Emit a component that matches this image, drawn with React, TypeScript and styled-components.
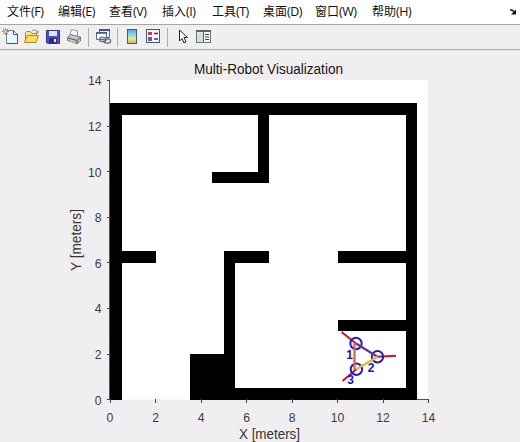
import React from 'react';
import styled, { createGlobalStyle } from 'styled-components';

const GlobalStyle = createGlobalStyle`
  * { box-sizing: border-box; }
  body { margin: 0; background: #f0eef0; overflow: hidden; }
`;

const Window = styled.div`
  width: 520px;
  height: 442px;
  display: flex;
  flex-direction: column;
  background: #f0eef0;
  overflow: hidden;
`;

const MenuBar = styled.nav`
  height: 24px;
  flex: none;
  display: flex;
  align-items: center;
  padding: 0 3px 0 7px;
  background: #fff;
`;

const MenuItem = styled.span<{ $width: number }>`
  width: ${p => p.$width}px;
  flex: none;
  font: 12px/24px 'Open Sans', 'Noto Sans CJK SC', sans-serif;
  color: #111;
  white-space: nowrap;
`;

const Shortcut = styled.span`
  font-size: 12.5px;
  letter-spacing: -0.5px;
`;

const DockButton = styled.span`
  margin-left: auto;
  display: flex;
`;

const ToolBar = styled.div`
  height: 26px;
  flex: none;
  display: flex;
  align-items: center;
  padding-left: 2px;
  background: #f0eff0;
  border-top: 1px solid #a6a6a6;
  border-bottom: 1px solid #b2b0b6;
`;

const Tool = styled.span<{ $gap?: number }>`
  display: flex;
  margin: -2px 0 0 ${p => p.$gap ?? 0}px;
`;

const Separator = styled.span<{ $gap: number }>`
  width: 1px;
  height: 19px;
  margin-left: ${p => p.$gap}px;
  background: #b0b0b0;
`;

const Figure = styled.main`
  flex: 1;
  min-height: 0;
  display: flex;
  border-top: 1px solid #e2e1e4;
`;

const Icon = ({ children }: { children: React.ReactNode }) => (
  <svg width="17" height="17" viewBox="0 0 17 17">{children}</svg>
);

const NewIcon = () => (
  <Icon>
    <path d="M4.5 2.5h7l4 4v9h-11z" fill="#eef5ff" stroke="#6b87a8" />
    <path d="M11.5 2.5v4h4M15.5 6v9.5H5" fill="none" stroke="#345a85" />
    <path d="M3.5 0v7M0 3.5h7M1 1l5 5M6 1L1 6" stroke="#d66b3c" />
    <circle cx="3.5" cy="3.5" r="1.2" fill="#ffe3a0" />
  </Icon>
);

const OpenIcon = () => (
  <Icon>
    <path d="M2.5 14.5v-10l1-1h4l1 2h5v3" fill="#ffe889" stroke="#b08c24" />
    <path d="M1.5 14.5l3-7h11l-2.5 7z" fill="#ffdc62" stroke="#b08c24" />
    <path d="M9 3c2-2 4-1.500 4.500 1M15 2.500v2.500h-2.500" fill="none" stroke="#7b8191" />
  </Icon>
);

const SaveIcon = () => (
  <Icon>
    <path d="M1.500 2.500h13v13h-12l-1-1z" fill="#4d50c4" stroke="#32368e" />
    <path d="M4 3h8v5H4z" fill="#dce7fb" />
    <path d="M4 10h8v5H4z" fill="#2c2f75" />
    <path d="M9 11h2v3H9z" fill="#eef" />
  </Icon>
);

const PrintIcon = () => (
  <Icon>
    <path d="M3.500 8l2-6.500 6 1.500 0 5" fill="#f8f9fb" stroke="#9799a0" />
    <path d="M1.500 9.500l3-3 10 2.500v4l-3.500 2.500-9.500-3z" fill="#c4c5c7" stroke="#77797c" />
    <path d="M2 10l9 2.500 3.500-3M11 12.500v3" fill="none" stroke="#55585c" />
    <path d="M4 13l5 1.500" stroke="#e5c64d" />
  </Icon>
);

const LinkIcon = () => (
  <Icon>
    <path d="M4.500 1.500h10v8h-10z" fill="#eef1f5" stroke="#5a6887" />
    <path d="M4 2h11" stroke="#415684" strokeWidth="2" />
    <path d="M1.500 4.500h10v7h-10z" fill="#f5f7fa" stroke="#5a6887" />
    <path d="M1 5h11" stroke="#415684" strokeWidth="1.500" />
    <rect x="4.500" y="9.500" width="6.500" height="4" rx="2" fill="none" stroke="#667995" strokeWidth="1.500" />
    <rect x="9" y="11" width="6.500" height="4" rx="2" fill="none" stroke="#667995" strokeWidth="1.500" />
  </Icon>
);

const ColorbarIcon = () => (
  <Icon>
    <defs>
      <linearGradient id="spectrum" x1="0" y1="0" x2="0" y2="1">
        <stop offset="0" stopColor="#6f98e6" />
        <stop offset=".38" stopColor="#79dfe8" />
        <stop offset=".65" stopColor="#e3ee87" />
        <stop offset="1" stopColor="#f4a15f" />
      </linearGradient>
    </defs>
    <rect x="3.500" y="1.500" width="9" height="14" fill="url(#spectrum)" stroke="#455984" />
  </Icon>
);

const LegendIcon = () => (
  <Icon>
    <rect x="1.500" y="1.500" width="13" height="13" fill="#f8f8fb" stroke="#47527d" />
    <rect x="3" y="4" width="4" height="3" fill="#d83c35" />
    <rect x="3" y="9" width="4" height="4" fill="#4b5ecb" />
    <path d="M9 5.500h4M9 11h4" stroke="#333f60" strokeWidth="1.300" />
  </Icon>
);

const PointerIcon = () => (
  <Icon>
    <path d="M5.500 2v11l2.500-2.500 2 4.500 2-1-2-4.500h3.500z" fill="#fff" stroke="#222" strokeLinejoin="round" />
  </Icon>
);

const PanelIcon = () => (
  <Icon>
    <rect x="1.500" y="2.500" width="14" height="12" fill="#f2f4f3" stroke="#6e7776" />
    <path d="M1 3h15" stroke="#52666d" strokeWidth="2" />
    <path d="M8.500 4v10" stroke="#5d6565" />
    <path d="M2 4.500h6v9.500H2z" fill="#d7dddd" />
    <path d="M10 6.500h4M10 9h4M10 11.500h4" stroke="#444b4b" />
  </Icon>
);

const DockIcon = () => (
  <svg width="8" height="8" viewBox="0 0 8 8">
    <path d="M1 2h2l2.500 2.500" fill="none" stroke="#111" strokeWidth="1.300" />
    <path d="M7 1.500v5H2z" fill="#111" />
  </svg>
);

const TickLabel = styled.text`
  font: 12.2px 'Liberation Sans', Arial, sans-serif;
  fill: #3c3c3c;
`;

const AxisLabel = styled.text`
  font: 14px 'Liberation Sans', Arial, sans-serif;
  fill: #333;
  text-anchor: middle;
`;

const Title = styled(AxisLabel)`
  fill: #161616;
`;

const RobotLabel = styled.text`
  font: bold 12px 'Liberation Sans', Arial, sans-serif;
  fill: #1414b8;
  text-anchor: middle;
`;

const LEFT = 110;
const BOTTOM = 399.6;
const UNIT = 22.76;
const px = (m: number) => LEFT + m * UNIT;
const py = (m: number) => BOTTOM - m * 22.8;

// Occupied areas of the map in meters: x, y, width, height.
const walls = [
  [0, 0, 0.5, 13],
  [0, 12.5, 13.5, 0.5],
  [13, 0, 0.5, 13],
  [3.5, 0, 10, 0.5],
  [3.5, 0, 2, 2],
  [5, 0, 0.5, 6.5],
  [5, 6, 2, 0.5],
  [0, 6, 2, 0.5],
  [10, 6, 3.5, 0.5],
  [10, 3, 3.5, 0.5],
  [4.5, 9.5, 2.5, 0.5],
  [6.5, 9.5, 0.5, 3.5],
];

const robots = [
  { id: 1, x: 356, y: 343.5, tipX: 341.5, tipY: 332, labelX: 349.5, labelY: 359 },
  { id: 2, x: 377.5, y: 356.7, tipX: 396, tipY: 355.8, labelX: 371, labelY: 372 },
  { id: 3, x: 356.4, y: 369.3, tipX: 342.5, tipY: 381, labelX: 350.7, labelY: 384 },
];

const ticks = [0, 2, 4, 6, 8, 10, 12, 14];

const Plot = () => (
  <svg width="520" height="391" viewBox="0 51 520 391">
    <rect x={LEFT} y="80" width="318" height="319.600" fill="#fff" />
    <g shapeRendering="crispEdges">
      {walls.map(([x, y, w, h], i) => {
        const x1 = Math.round(px(x));
        const x2 = Math.round(px(x + w) + 0.15);
        const y1 = Math.round(py(y + h));
        const y2 = Math.round(py(y));
        return <rect key={i} x={x1} y={y1} width={x2 - x1} height={y2 - y1} fill="#000" />;
      })}
      <path d="M109.500 80V400M417 399.500H429" fill="none" stroke="#555" />
      {ticks.map(t => (
        <path
          key={t}
          d={`M107 ${Math.floor(py(t)) + 0.5}h3M${Math.floor(px(t)) + 0.5} 399v4`}
          stroke="#444"
        />
      ))}
    </g>
    {ticks.map(t => (
      <g key={t}>
        <TickLabel x="101.500" y={py(t) + 5} textAnchor="end">{t}</TickLabel>
        <TickLabel x={px(t)} y="421.500" textAnchor="middle">{t}</TickLabel>
      </g>
    ))}
    <Title x="268.500" y="74" textLength="149" lengthAdjust="spacingAndGlyphs">
      Multi-Robot Visualization
    </Title>
    <AxisLabel x="269.500" y="439" textLength="61" lengthAdjust="spacingAndGlyphs">
      X [meters]
    </AxisLabel>
    <AxisLabel
      transform="translate(81 240) rotate(-90)"
      textLength="62"
      lengthAdjust="spacingAndGlyphs"
    >
      Y [meters]
    </AxisLabel>
    {robots.map(r => (
      <React.Fragment key={r.id}>
        <path d={`M${r.x} ${r.y}L${r.tipX} ${r.tipY}`} stroke="#c8142b" strokeWidth="2" />
        <circle cx={r.x} cy={r.y} r="5.700" fill="none" stroke="#2419c8" strokeWidth="2" />
      </React.Fragment>
    ))}
    <path d="M356 343.500L377.500 356.700" stroke="#703090" strokeWidth="2.300" />
    <path d="M377.500 356.700L356.400 369.300" stroke="#e3b83a" strokeWidth="2.300" />
    <path d="M354.500 342.500V370" stroke="#df6832" strokeWidth="2.300" />
    {robots.map(r => (
      <RobotLabel key={r.id} x={r.labelX} y={r.labelY}>{r.id}</RobotLabel>
    ))}
  </svg>
);

const menus: [string, string, number][] = [
  ['文件', 'F', 51],
  ['编辑', 'E', 51],
  ['查看', 'V', 53],
  ['插入', 'I', 50],
  ['工具', 'T', 51],
  ['桌面', 'D', 52],
  ['窗口', 'W', 57],
  ['帮助', 'H', 50],
];

export default function App() {
  return (
    <>
      <GlobalStyle />
      <Window>
        <MenuBar>
          {menus.map(([label, key, width]) => (
            <MenuItem key={key} $width={width}>
              {label}<Shortcut>({key})</Shortcut>
            </MenuItem>
          ))}
          <DockButton><DockIcon /></DockButton>
        </MenuBar>
        <ToolBar>
          <Tool><NewIcon /></Tool>
          <Tool $gap={4}><OpenIcon /></Tool>
          <Tool $gap={5}><SaveIcon /></Tool>
          <Tool $gap={4}><PrintIcon /></Tool>
          <Separator $gap={5} />
          <Tool $gap={6}><LinkIcon /></Tool>
          <Separator $gap={5} />
          <Tool $gap={6}><ColorbarIcon /></Tool>
          <Tool $gap={4}><LegendIcon /></Tool>
          <Separator $gap={5} />
          <Tool $gap={6}><PointerIcon /></Tool>
          <Tool $gap={4}><PanelIcon /></Tool>
        </ToolBar>
        <Figure><Plot /></Figure>
      </Window>
    </>
  );
}
